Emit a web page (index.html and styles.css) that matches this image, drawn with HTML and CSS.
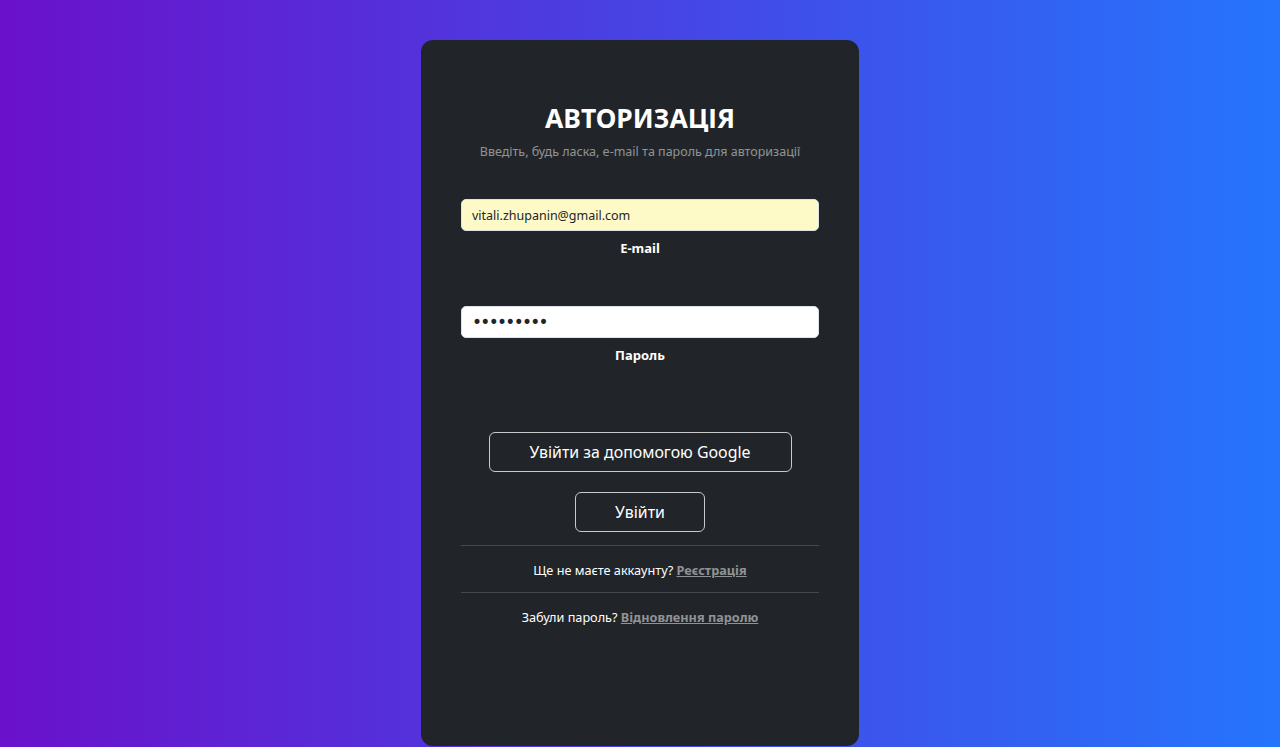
FILE: index.html
```html
<!DOCTYPE html>
<html lang="uk">
<head>
<meta charset="utf-8">
<title>Авторизація</title>
<link rel="stylesheet" href="styles.css">
</head>
<body>
<main class="page">
  <section class="card">
    <h2 class="title">АВТОРИЗАЦІЯ</h2>
    <p class="subtitle">Введіть, будь ласка, e-mail та пароль для авторизації</p>

    <div class="field field-email">
      <input class="input input-autofill" type="email" value="vitali.zhupanin@gmail.com">
      <label class="label">E-mail</label>
    </div>

    <div class="field field-pass">
      <input class="input input-pass" type="password" value="123456789">
      <label class="label">Пароль</label>
    </div>

    <div class="buttons">
      <button class="btn btn-google">Увійти за допомогою Google</button>
      <button class="btn btn-login">Увійти</button>
    </div>

    <hr class="sep">
    <p class="note">Ще не маєте аккаунту? <a href="#" class="link">Реєстрація</a></p>
    <hr class="sep">
    <p class="note">Забули пароль? <a href="#" class="link">Відновлення паролю</a></p>
  </section>
</main>
</body>
</html>
```

FILE: styles.css
```css
* { box-sizing: border-box; }
html, body { margin: 0; padding: 0; }
body {
  height: 747px;
  overflow: hidden;
  background: linear-gradient(to right, #6a11cb, #2575fc);
  font-family: "Noto Sans", "Open Sans", sans-serif;
  color: #fff;
}
.page {
  display: flex;
  justify-content: center;
  padding-top: 40px;
}
.card {
  width: 438px;
  height: 706px;
  background: #212529;
  border-radius: 12px;
  padding: 0 40px;
  display: flex;
  flex-direction: column;
  align-items: stretch;
  text-align: center;
}
.title {
  margin: 60px 0 0;
  font-size: 26.5px;
  line-height: 36px;
  font-weight: 700;
  letter-spacing: 0;
}
.subtitle {
  margin: 7px 0 0;
  font-size: 12.5px;
  line-height: 18px;
  color: rgba(255,255,255,0.5);
}
.field {
  display: flex;
  flex-direction: column;
  align-items: stretch;
}
.field-email { margin-top: 38px; }
.field-pass { margin-top: 49px; }
.input {
  height: 32px;
  border: 1px solid #dee2e6;
  border-radius: 5px;
  background: #fff;
  padding: 0 10px;
  font-family: inherit;
  font-size: 12.5px;
  color: #212529;
  outline: none;
}
.input-autofill { background: #fefac8; }
.input-pass {
  font-family: "DejaVu Sans", sans-serif;
  font-size: 17px;
  letter-spacing: -1.7px;
}
.label {
  margin-top: 8px;
  font-size: 13px;
  line-height: 18px;
  font-weight: 700;
}
.buttons {
  margin-top: 68px;
  display: flex;
  flex-direction: column;
  align-items: center;
  gap: 20px;
}
.btn {
  height: 40px;
  background: transparent;
  border: 1px solid #c8c9ca;
  border-radius: 6px;
  color: #fff;
  font-family: inherit;
  font-size: 15.9px;
  padding: 0;
}
.btn-google { width: 303px; }
.btn-login { width: 130px; }
.sep {
  margin: 13px 0 0;
  border: 0;
  border-top: 1px solid #45484c;
  height: 0;
}
.note {
  margin: 15px 0 13px;
  font-size: 12.7px;
  line-height: 18px;
  color: #fff;
}
.note + .sep { margin-top: 0; }
.link {
  color: rgba(255,255,255,0.5);
  font-weight: 700;
  text-decoration: underline;
}
```
